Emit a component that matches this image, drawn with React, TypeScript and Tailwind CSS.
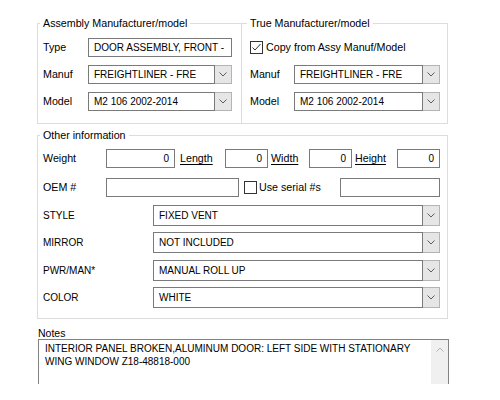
import React from "react";

function Chevron({ up }: { up?: boolean }) {
  return (
    <svg width="8" height="5" viewBox="0 0 8 5" className="block">
      <polyline
        points={up ? "0.5,4.5 4,1 7.5,4.5" : "0.5,0.5 4,4 7.5,0.5"}
        fill="none"
        stroke={up ? "#b4b4b4" : "#5c5c5c"}
        strokeWidth="1"
      />
    </svg>
  );
}

function CheckBox({ checked }: { checked?: boolean }) {
  return (
    <div className="w-[13px] h-[13px] border border-[#333333] bg-white flex items-center justify-center shrink-0">
      {checked && (
        <svg width="11" height="11" viewBox="0 0 11 11" className="block">
          <polyline points="1.5,5.5 4,8 9.5,2" fill="none" stroke="#333333" strokeWidth="1" />
        </svg>
      )}
    </div>
  );
}

function Combo({ className, value }: { className: string; value: string }) {
  return (
    <div className={"flex " + className}>
      <div className="flex-1 border border-[#7a7a7a] bg-white flex items-center pl-[5px] text-[10px] whitespace-nowrap overflow-hidden">
        {value}
      </div>
      <div className="w-[17px] border-y border-r border-[#b4b4b4] bg-[#e6e6e6] flex items-center justify-center">
        <Chevron />
      </div>
    </div>
  );
}

function NumBox({ className, value }: { className: string; value: string }) {
  return (
    <div className={"h-[19px] border border-[#7a7a7a] bg-white flex items-center justify-end pr-[5px] text-[10px] " + className}>
      {value}
    </div>
  );
}

export default function App() {
  return (
    <div className="w-[500px] h-[400px] bg-white overflow-hidden text-black font-['Liberation_Sans',Arial,sans-serif] text-[10.7px] pl-[37px] pt-[17px]">
      {/* Top groups */}
      <div className="flex">
        <fieldset className="w-[205px] border border-[#dcdcdc] p-0 m-0 min-w-0">
          <legend className="ml-[2px] px-[3px] leading-[12px]">Assembly Manufacturer/model</legend>
          <div className="flex flex-col gap-[8px] pt-[9px] pl-[5px] pb-[12px]">
            <div className="flex items-center h-[19px]">
              <span className="w-[45px]">Type</span>
              <div className="w-[144px] h-[19px] border border-[#7a7a7a] flex items-center pl-[5px] text-[10px] whitespace-nowrap overflow-hidden">
                DOOR ASSEMBLY, FRONT -
              </div>
            </div>
            <div className="flex items-center h-[19px]">
              <span className="w-[45px]">Manuf</span>
              <Combo className="w-[144px] h-[19px]" value="FREIGHTLINER - FRE" />
            </div>
            <div className="flex items-center h-[19px]">
              <span className="w-[45px]">Model</span>
              <Combo className="w-[144px] h-[19px]" value="M2 106 2002-2014" />
            </div>
          </div>
        </fieldset>
        <fieldset className="w-[206px] border border-l-0 border-[#dcdcdc] p-0 m-0 min-w-0">
          <legend className="ml-[5px] px-[3px] leading-[12px]">True Manufacturer/model</legend>
          <div className="flex flex-col gap-[8px] pt-[9px] pl-[8px] pb-[12px]">
            <div className="flex items-center h-[19px] gap-[3px]">
              <CheckBox checked />
              <span>Copy from Assy Manuf/Model</span>
            </div>
            <div className="flex items-center h-[19px]">
              <span className="w-[44px]">Manuf</span>
              <Combo className="w-[146px] h-[19px]" value="FREIGHTLINER - FRE" />
            </div>
            <div className="flex items-center h-[19px]">
              <span className="w-[44px]">Model</span>
              <Combo className="w-[146px] h-[19px]" value="M2 106 2002-2014" />
            </div>
          </div>
        </fieldset>
      </div>

      {/* Other information */}
      <fieldset className="mt-[5px] w-[411px] border border-[#dcdcdc] p-0 m-0 min-w-0">
        <legend className="ml-[2px] px-[3px] leading-[12px]">Other information</legend>
        <div className="flex flex-col pt-[8px] pl-[5px] pb-[10px]">
          <div className="flex items-center h-[19px]">
            <span className="w-[63px]">Weight</span>
            <NumBox className="w-[69px]" value="0" />
            <span className="w-[50px] pl-[5px] underline underline-offset-[2px]">Length</span>
            <NumBox className="w-[43px]" value="0" />
            <span className="w-[41px] pl-[3px] underline underline-offset-[2px]">Width</span>
            <NumBox className="w-[43px]" value="0" />
            <span className="w-[45px] pl-[3px] underline underline-offset-[2px]">Height</span>
            <NumBox className="w-[43px]" value="0" />
          </div>
          <div className="flex items-center h-[19px] mt-[10px]">
            <span className="w-[63px]">OEM #</span>
            <div className="w-[133px] h-[19px] border border-[#7a7a7a]" />
            <div className="w-[101px] pl-[5px] flex items-center gap-[2px]">
              <CheckBox />
              <span>Use serial #s</span>
            </div>
            <div className="w-[100px] h-[19px] border border-[#7a7a7a]" />
          </div>
          <div className="flex items-center h-[21px] mt-[8px]">
            <span className="w-[110px] text-[10px]">STYLE</span>
            <Combo className="w-[287px] h-[21px]" value="FIXED VENT" />
          </div>
          <div className="flex items-center h-[21px] mt-[6px]">
            <span className="w-[110px] text-[10px]">MIRROR</span>
            <Combo className="w-[287px] h-[21px]" value="NOT INCLUDED" />
          </div>
          <div className="flex items-center h-[21px] mt-[7px]">
            <span className="w-[110px] text-[10px]">PWR/MAN*</span>
            <Combo className="w-[287px] h-[21px]" value="MANUAL ROLL UP" />
          </div>
          <div className="flex items-center h-[21px] mt-[6px]">
            <span className="w-[110px] text-[10px]">COLOR</span>
            <Combo className="w-[287px] h-[21px]" value="WHITE" />
          </div>
        </div>
      </fieldset>

      {/* Notes */}
      <div className="mt-[9px] ml-[1px] leading-[11px] text-[10.5px]">Notes</div>
      <div className="ml-[1px] w-[411px] h-[45px] border-x border-t border-[#828282] flex">
        <div className="flex-1 pl-[6px] pt-[2px] text-[10px] leading-[13px] whitespace-nowrap">
          <div>INTERIOR PANEL BROKEN,ALUMINUM DOOR: LEFT SIDE WITH STATIONARY</div>
          <div>WING WINDOW Z18-48818-000</div>
        </div>
        <div className="w-[17px] bg-[#f0f0f0] flex justify-center pt-[7px]">
          <Chevron up />
        </div>
      </div>
    </div>
  );
}
